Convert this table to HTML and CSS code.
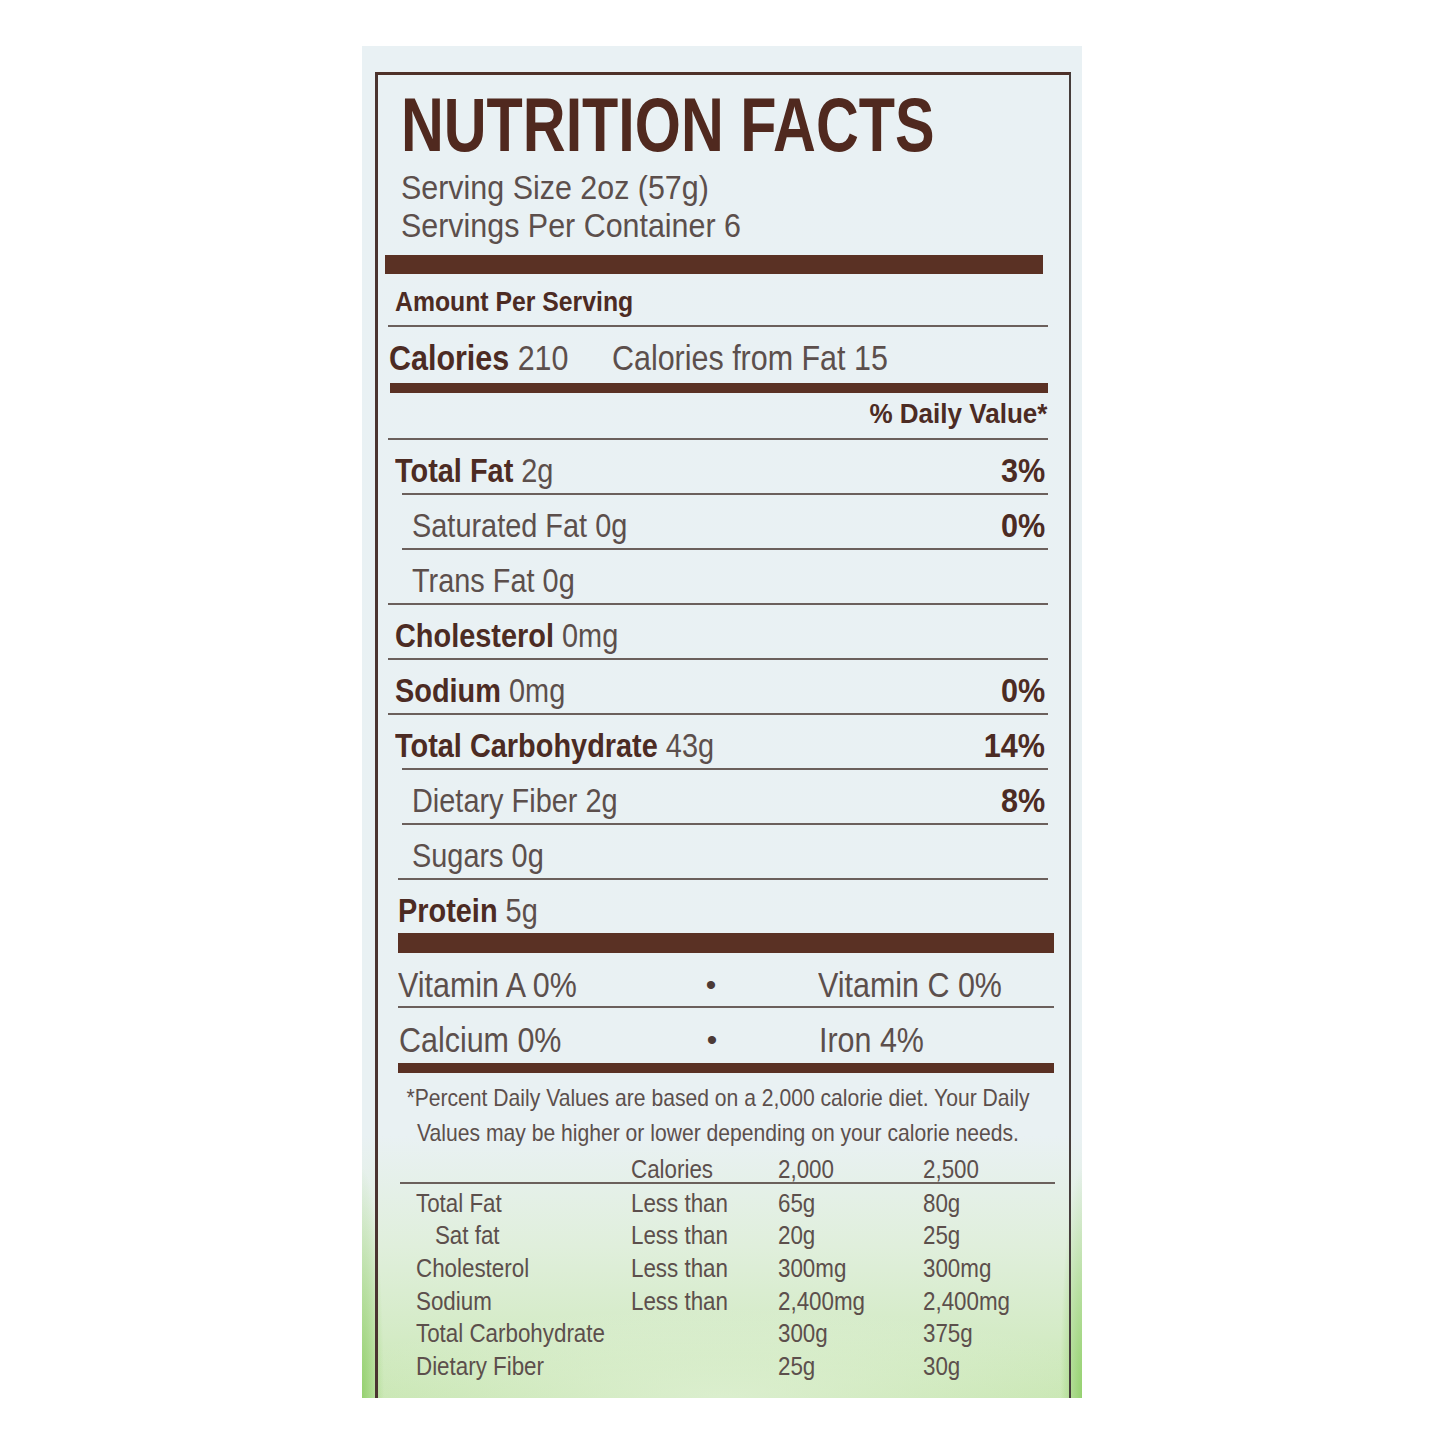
FILE: index.html
```html
<!DOCTYPE html>
<html lang="en">
<head>
<meta charset="utf-8">
<title>Nutrition Facts</title>
<link rel="stylesheet" href="styles.css">
</head>
<body>
<div class="page">
  <div class="panel">
    <div class="label">
      <div class="hdr">
        <div class="title"><span class="sx">NUTRITION FACTS</span></div>
        <div class="serving">
          <div><span class="sx">Serving Size 2oz (57g)</span></div>
          <div><span class="sx">Servings Per Container 6</span></div>
        </div>
      </div>
      <div class="bar bar-1"></div>
      <div class="sec1">
        <div class="row amount"><span class="sx"><b>Amount Per Serving</b></span></div>
        <div class="row calories"><span class="sx"><b>Calories</b> 210</span><span class="sx cff">Calories from Fat 15</span></div>
        <div class="bar bar-2"></div>
        <div class="row dv"><span class="sx r"><b>% Daily Value*</b></span></div>
        <div class="row nut"><span class="sx"><b>Total Fat</b> 2g</span><span class="sx r pct"><b>3%</b></span></div>
        <div class="row nut sub"><span class="sx">Saturated Fat 0g</span><span class="sx r pct"><b>0%</b></span></div>
        <div class="row nut sub"><span class="sx">Trans Fat 0g</span></div>
        <div class="row nut"><span class="sx"><b>Cholesterol</b> 0mg</span></div>
        <div class="row nut"><span class="sx"><b>Sodium</b> 0mg</span><span class="sx r pct"><b>0%</b></span></div>
        <div class="row nut"><span class="sx"><b>Total Carbohydrate</b> 43g</span><span class="sx r pct"><b>14%</b></span></div>
        <div class="row nut sub"><span class="sx">Dietary Fiber 2g</span><span class="sx r pct"><b>8%</b></span></div>
        <div class="row nut sub"><span class="sx">Sugars 0g</span></div>
        <div class="row nut prot"><span class="sx"><b>Protein</b> 5g</span></div>
      </div>
      <div class="sec2">
        <div class="bar bar-3"></div>
        <div class="vit vit-1"><span class="sx">Vitamin A 0%</span><span class="dot">•</span><span class="sx v2">Vitamin C 0%</span></div>
        <div class="vit vit-2"><span class="sx">Calcium 0%</span><span class="dot">•</span><span class="sx v2">Iron 4%</span></div>
        <div class="bar bar-4"></div>
        <p class="foot">*Percent Daily Values are based on a 2,000 calorie diet. Your Daily<br>Values may be higher or lower depending on your calorie needs.</p>
        <div class="dvt">
          <div class="dvt-head">
            <span></span><span>Calories</span><span>2,000</span><span>2,500</span>
          </div>
          <div class="dvt-body">
            <span>Total Fat</span><span>Less than</span><span>65g</span><span>80g</span>
            <span class="ind">Sat fat</span><span>Less than</span><span>20g</span><span>25g</span>
            <span>Cholesterol</span><span>Less than</span><span>300mg</span><span>300mg</span>
            <span>Sodium</span><span>Less than</span><span>2,400mg</span><span>2,400mg</span>
            <span>Total Carbohydrate</span><span></span><span>300g</span><span>375g</span>
            <span>Dietary Fiber</span><span></span><span>25g</span><span>30g</span>
          </div>
        </div>
      </div>
    </div>
  </div>
</div>
</body>
</html>
```

FILE: styles.css
```css
html, body {
  margin: 0;
  padding: 0;
  background: #ffffff;
}

.page {
  padding: 46px 0 0 362px;
}

.panel {
  width: 720px;
  height: 1352px;
  box-sizing: border-box;
  padding: 26px 11px 0 13px;
  background:
    radial-gradient(ellipse 22px 230px at 0 100%, rgba(140, 205, 100, 0.85), rgba(140, 205, 100, 0)),
    radial-gradient(ellipse 22px 230px at 100% 100%, rgba(140, 205, 100, 0.85), rgba(140, 205, 100, 0)),
    radial-gradient(ellipse 420px 90px at 50% 100%, rgba(235, 245, 230, 0.55), rgba(235, 245, 230, 0)),
    linear-gradient(to bottom, #e9f1f4 0, #e9f1f3 1090px, #e0efdc 1200px, #d4ebc6 1290px, #c7e6b0 1352px);
  font-family: "Liberation Sans", Arial, sans-serif;
  color: #5c4f4c;
}

.label {
  height: 1326px;
  box-sizing: border-box;
  border-left: 3px solid #4a3430;
  border-top: 3px solid #4e3129;
  border-right: 2px solid #463d3b;
}

b {
  font-weight: 700;
  color: #4c2b23;
}

.sx {
  display: inline-block;
  white-space: nowrap;
  transform-origin: left center;
  transform: scaleX(var(--sx, 0.85));
}

.sx.r {
  transform-origin: right center;
}

.hdr {
  padding-left: 23px;
}

.title {
  margin-top: 10px;
  font-size: 76px;
  line-height: 80px;
  font-weight: 700;
  color: #50291f;
  white-space: nowrap;
  --sx: 0.78;
}

.serving {
  margin-top: 3px;
  font-size: 34px;
  line-height: 38px;
  --sx: 0.895;
}

.bar {
  background: #5a3124;
}

.bar-1 {
  height: 19px;
  margin: 11px 26px 0 7px;
}

.sec1 {
  padding: 0 21px 0 10px;
}

.row {
  display: flex;
  justify-content: space-between;
  align-items: center;
  box-sizing: border-box;
  white-space: nowrap;
}

.amount {
  height: 51px;
  padding: 5px 0 0 7px;
  font-size: 28px;
  --sx: 0.885;
}

.calories {
  height: 58px;
  border-top: 2px solid #6b605c;
  padding: 6px 0 0 1px;
  font-size: 35px;
  justify-content: flex-start;
  --sx: 0.87;
}

.calories .cff {
  margin-left: 17px;
}

.bar-2 {
  height: 10px;
  margin-left: 2px;
}

.dv {
  height: 45px;
  padding: 0 1px 3px 0;
  justify-content: flex-end;
  font-size: 28px;
  --sx: 0.93;
}

.nut {
  height: 55px;
  border-top: 2px solid #6b605c;
  padding: 7px 3px 0 7px;
  font-size: 34px;
  --sx: 0.85;
}

.nut .pct {
  --sx: 0.9;
}

.nut.sub {
  margin-left: 14px;
  padding-left: 10px;
}

.nut.prot {
  margin-left: 10px;
  padding-left: 0;
}

.sec2 {
  padding: 0 15px 0 20px;
}

.bar-3 {
  height: 20px;
}

.vit {
  display: grid;
  grid-template-columns: 300px 26px 1fr;
  align-items: center;
  box-sizing: border-box;
  font-size: 35px;
  white-space: nowrap;
  --sx: 0.87;
}

.vit .dot {
  text-align: center;
  font-size: 30px;
  color: #4c3a36;
}

.vit .v2 {
  margin-left: 94px;
  justify-self: start;
}

.vit .sx {
  justify-self: start;
}

.vit-1 {
  height: 53px;
  padding-top: 11px;
}

.vit-2 {
  height: 57px;
  border-top: 2px solid #6b605c;
  padding-top: 9px;
  padding-left: 1px;
}

.bar-4 {
  height: 10px;
}

.foot {
  width: 740px;
  margin: 7px 0 0 -50px;
  text-align: center;
  font-size: 24px;
  line-height: 35px;
  white-space: nowrap;
  transform: scaleX(0.88);
  transform-origin: center;
}

.dvt {
  margin-left: 2px;
  margin-right: -1px;
  font-size: 26px;
}

.dvt-head,
.dvt-body {
  display: grid;
  grid-template-columns: 215px 147px 145px 1fr;
  padding-left: 16px;
  white-space: nowrap;
}

.dvt-head > span,
.dvt-body > span {
  transform-origin: left center;
  transform: scaleX(0.86);
}

.dvt-head {
  height: 34px;
  box-sizing: border-box;
  padding-top: 4px;
  align-items: center;
  border-bottom: 2px solid #6b605c;
}

.dvt-body {
  padding-top: 3px;
  grid-auto-rows: 32.6px;
  align-items: center;
}

.dvt-body .ind {
  padding-left: 22px;
}
```
